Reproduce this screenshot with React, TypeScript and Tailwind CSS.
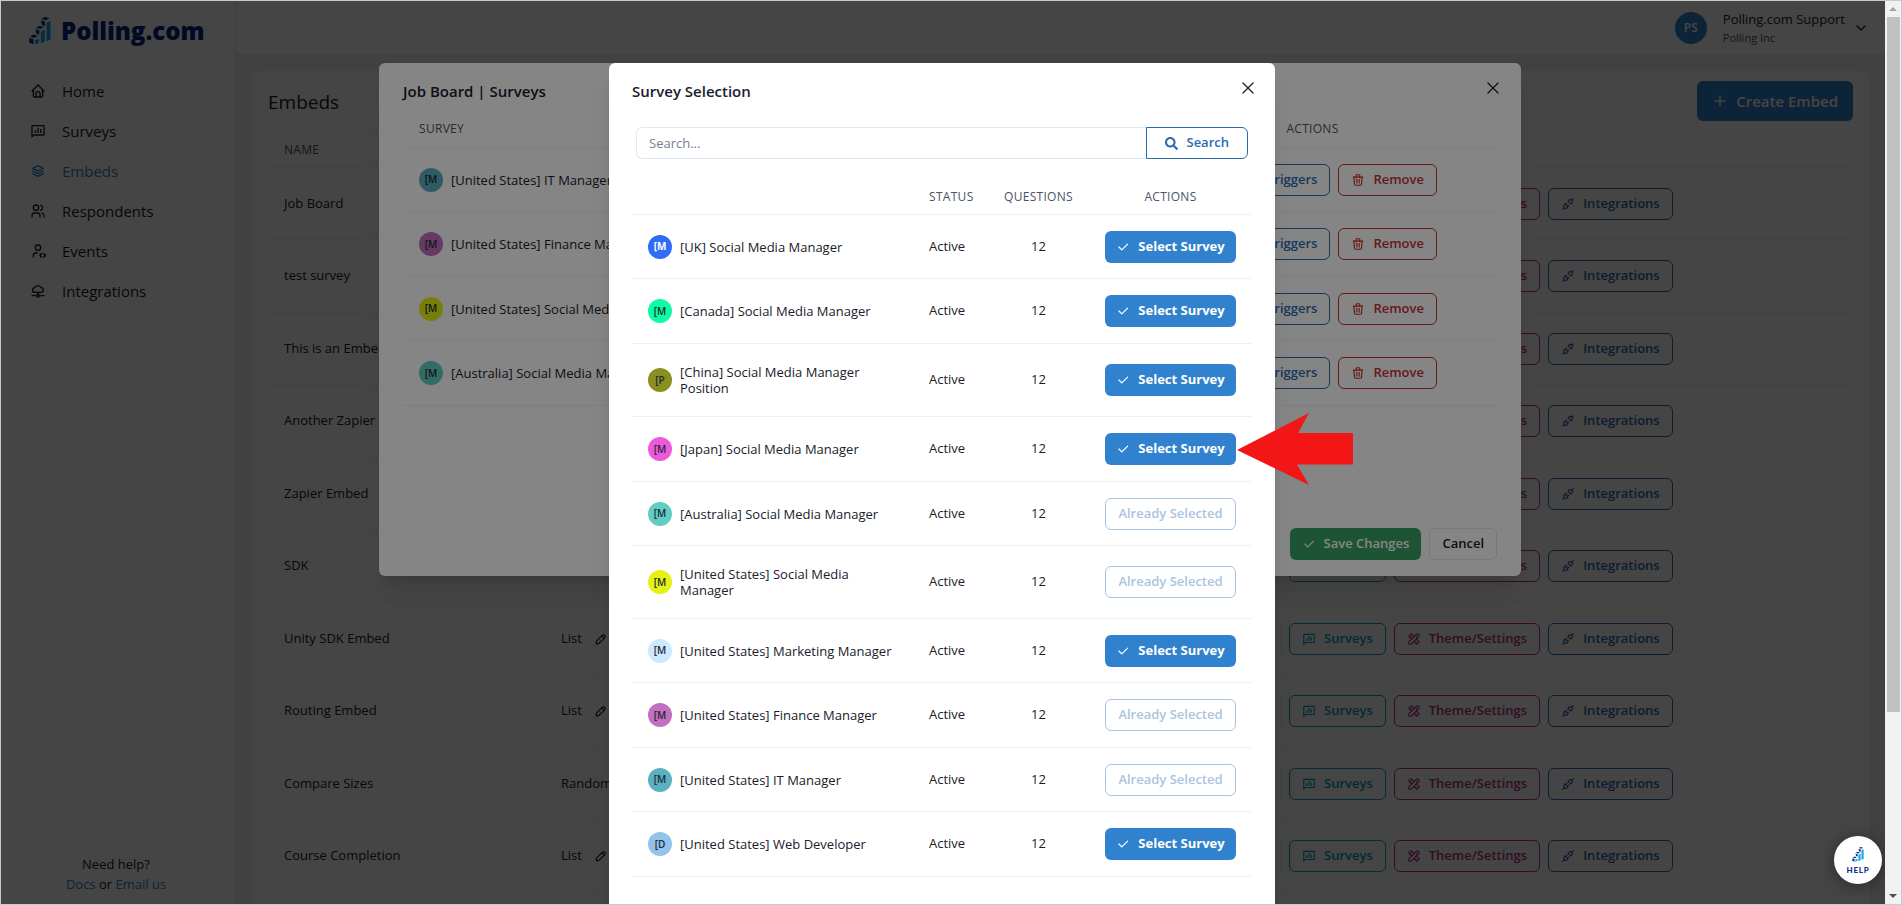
import type { ReactNode } from "react";
import type { IconType } from "react-icons";
import { FaSearch } from "react-icons/fa";
import { RiChatPollLine } from "react-icons/ri";
import {
  TbCheck,
  TbChevronDown,
  TbHome,
  TbPencil,
  TbPlugConnected,
  TbPlus,
  TbStack2,
  TbTools,
  TbTrash,
  TbUsers,
  TbX,
} from "react-icons/tb";

type Survey = {
  name: string;
  initials: string;
  color: string;
  light?: boolean;
  selected?: boolean;
  pointed?: boolean;
};

const surveys: Survey[] = [
  { name: "[UK] Social Media Manager", initials: "[M", color: "#2f6df6", light: true },
  { name: "[Canada] Social Media Manager", initials: "[M", color: "#0dfca4" },
  { name: "[China] Social Media Manager Position", initials: "[P", color: "#8b8f1f" },
  { name: "[Japan] Social Media Manager", initials: "[M", color: "#ee59dc", pointed: true },
  { name: "[Australia] Social Media Manager", initials: "[M", color: "#62cdc2", selected: true },
  { name: "[United States] Social Media Manager", initials: "[M", color: "#e5f213", selected: true },
  { name: "[United States] Marketing Manager", initials: "[M", color: "#cde8ff" },
  { name: "[United States] Finance Manager", initials: "[M", color: "#c26fbf", selected: true },
  { name: "[United States] IT Manager", initials: "[M", color: "#5bb1c0", selected: true },
  { name: "[United States] Web Developer", initials: "[D", color: "#93c2eb" },
];

const boardSurveys = [surveys[8], surveys[7], surveys[5], surveys[4]];

const embeds = [
  { name: "Job Board", type: "List" },
  { name: "test survey", type: "List" },
  { name: "This is an Embed", type: "List" },
  { name: "Another Zapier", type: "List" },
  { name: "Zapier Embed", type: "List" },
  { name: "SDK", type: "List" },
  { name: "Unity SDK Embed", type: "List" },
  { name: "Routing Embed", type: "List" },
  { name: "Compare Sizes", type: "Random" },
  { name: "Course Completion", type: "List" },
];

function UserEventIcon({ className }: { className?: string }) {
  return (
    <svg
      viewBox="0 0 24 24"
      className={className}
      fill="none"
      stroke="currentColor"
      strokeWidth="2"
      strokeLinecap="round"
      strokeLinejoin="round"
      aria-hidden="true"
    >
      <circle cx="12" cy="7" r="4" />
      <path d="M5 21v-2a4 4 0 0 1 4-4h2" />
      <path d="M17 16 15 18.500l2 2.500M21 16l2 2.500-2 2.500" strokeWidth="2.500" />
    </svg>
  );
}

function CloudNetworkIcon({ className }: { className?: string }) {
  return (
    <svg
      viewBox="0 0 24 24"
      className={className}
      fill="none"
      stroke="currentColor"
      strokeWidth="2"
      strokeLinecap="round"
      strokeLinejoin="round"
      aria-hidden="true"
    >
      <path d="M3 19h7M14 19h7M12 14v3" />
      <circle cx="12" cy="19" r="2" />
      <path d="M7.500 14a3.500 3.500 0 0 1-.3-7A5 5 0 0 1 16.500 7a3.500 3.500 0 0 1 0 7z" />
    </svg>
  );
}

const navItems: { label: string; Icon: IconType | typeof UserEventIcon; active?: boolean }[] = [
  { label: "Home", Icon: TbHome },
  { label: "Surveys", Icon: RiChatPollLine },
  { label: "Embeds", Icon: TbStack2, active: true },
  { label: "Respondents", Icon: TbUsers },
  { label: "Events", Icon: UserEventIcon },
  { label: "Integrations", Icon: CloudNetworkIcon },
];

// three stacked columns with isometric caps
function LogoMark({ className }: { className?: string }) {
  return (
    <svg viewBox="0 0 22 28" className={className} aria-hidden="true">
      <path
        fill="#16a5e8"
        d="M17.500 5.500 21.500 4v18.500l-4 1.500zM11.800 14.500l4-1.700v12l-4 1.700zM6 23.300l4-1.500v4L6 27.500z"
      />
      <g fill="#14308c">
        <path d="m16 0 4.500 1.300-3.500 2-4.700-1.300zM11.800 3.200l4.200 1.400v4.600l-3-1.200zM10.500 8.800l4.300 1.300-3.700 2-4.300-1.300zM6.300 12l4.100 1.500v4.200l-3-1zM4.600 17.600l4.300 1.300-3.700 2-4.200-1.300zM.3 20.800l4.200 1.500v5L.3 25.700z" />
      </g>
    </svg>
  );
}

function OutlineButton({ className, children }: { className: string; children: ReactNode }) {
  return (
    <button
      type="button"
      className={`inline-flex h-8 items-center justify-center gap-2 rounded-md border px-3 text-[13px] font-semibold whitespace-nowrap ${className}`}
    >
      {children}
    </button>
  );
}

function SurveyName({ survey }: { survey: Survey }) {
  return (
    <div className="flex items-center gap-2">
      <span
        className={`-my-px flex size-6 shrink-0 items-center justify-center rounded-full text-[10px] ${
          survey.light ? "font-bold text-white" : "font-semibold text-gray-800"
        }`}
        style={{ backgroundColor: survey.color }}
      >
        {survey.initials}
      </span>
      <span className="leading-4">{survey.name}</span>
    </div>
  );
}

function Sidebar() {
  return (
    <aside className="flex w-[235px] shrink-0 flex-col border-r border-[#e2e8f0] bg-white">
      <a href="#" className="flex items-center gap-2.5 px-7 pt-[14px]">
        <LogoMark className="h-7 w-[22px]" />
        <span className="text-2xl leading-8 font-extrabold text-[#0b2580]">Polling.com</span>
      </a>
      <nav className="mt-6 flex flex-col">
        {navItems.map(({ label, Icon, active }) => (
          <a
            key={label}
            href="#"
            className={`flex h-10 items-center gap-4 pl-[29px] text-[15px] ${
              active ? "font-medium text-[#3182ce]" : "text-[#1a202c]"
            }`}
          >
            <Icon className="size-4" />
            {label}
          </a>
        ))}
      </nav>
      <div className="mt-auto pr-1 pb-2.5 text-center text-[13px] leading-5">
        <p>Need help?</p>
        <p>
          <a href="#" className="text-[#3182ce]">
            Docs
          </a>{" "}
          or{" "}
          <a href="#" className="text-[#3182ce]">
            Email us
          </a>
        </p>
      </div>
    </aside>
  );
}

function Header() {
  return (
    <header className="flex h-[54px] shrink-0 items-center justify-end gap-4 border-b border-[#e2e8f0] bg-white pr-4">
      <span className="flex size-8 items-center justify-center rounded-full bg-[#3182ce] text-xs font-semibold text-white">
        PS
      </span>
      <div>
        <p className="text-[13px] leading-5">Polling.com Support</p>
        <p className="text-[11px] leading-[18px] text-[#4a5568]">Polling Inc</p>
      </div>
      <button type="button" aria-label="Account menu" className="-ml-2">
        <TbChevronDown className="size-4" />
      </button>
    </header>
  );
}

function EmbedsCard() {
  return (
    <section className="m-4 rounded-lg bg-white px-4 pb-16">
      <div className="flex h-[60px] items-center justify-between">
        <h1 className="pt-0.5 text-[19px] font-medium">Embeds</h1>
        <button
          type="button"
          className="flex h-10 items-center gap-2 rounded-md bg-[#3182ce] px-[15px] text-[15px] font-semibold text-white"
        >
          <TbPlus className="size-4" />
          Create Embed
        </button>
      </div>
      <table className="w-full table-fixed border-separate border-spacing-0 border-t border-[#edf2f7] text-left text-[13px]">
        <thead>
          <tr className="h-9 text-xs tracking-wide text-[#4a5568]">
            <th className="w-[277px] border-b border-[#edf2f7] px-4 font-normal">NAME</th>
            <th className="w-[620px] border-b border-[#edf2f7] px-4 font-normal">TYPE</th>
            <th className="border-b border-[#edf2f7] px-4 font-normal">ACTIONS</th>
          </tr>
        </thead>
        <tbody>
          {embeds.map((embed) => (
            <tr key={embed.name} className="odd:h-18 even:h-[73px]">
              <td className="border-b border-[#edf2f7] px-4">{embed.name}</td>
              <td className="border-b border-[#edf2f7] px-4">
                <span className="flex items-center gap-3">
                  {embed.type}
                  <TbPencil className="size-[14px]" />
                </span>
              </td>
              <td className="border-b border-[#edf2f7] pl-4">
                <div className="flex gap-2">
                  <OutlineButton className="w-[100px] border-[#e2e8f0]">Details</OutlineButton>
                  <OutlineButton className="border-[#00a3c4] text-[#00a3c4]">
                    <RiChatPollLine className="size-[14px]" />
                    Surveys
                  </OutlineButton>
                  <OutlineButton className="border-[#b83280] text-[#b83280]">
                    <TbTools className="size-[14px]" />
                    Theme/Settings
                  </OutlineButton>
                  <OutlineButton className="border-[#2b6cb0] text-[#2b6cb0]">
                    <TbPlugConnected className="size-[14px]" />
                    Integrations
                  </OutlineButton>
                </div>
              </td>
            </tr>
          ))}
        </tbody>
      </table>
    </section>
  );
}

function ModalHeader({ title }: { title: string }) {
  return (
    <div className="flex h-12 items-start justify-between">
      <h2 className="pt-4 text-[15px] leading-6 font-semibold">{title}</h2>
      <button type="button" aria-label="Close" className="-mr-1.5 pt-[15px]">
        <TbX className="size-5" strokeWidth={1.5} />
      </button>
    </div>
  );
}

function BoardModal() {
  return (
    <div
      role="dialog"
      aria-label="Job Board | Surveys"
      className="flex w-[1142px] max-w-full flex-col self-start rounded-md bg-white px-6 pb-4 shadow-xl"
    >
      <ModalHeader title="Job Board | Surveys" />
      <div className="min-h-[401px]">
        <table className="w-full table-fixed border-separate border-spacing-0 text-left text-[13px]">
          <thead>
            <tr className="h-[37px] text-xs tracking-wide text-[#4a5568]">
              <th className="border-b border-[#edf2f7] px-4 font-normal">SURVEY</th>
              <th className="w-[369px] border-b border-[#edf2f7] px-4 text-center font-normal">
                ACTIONS
              </th>
            </tr>
          </thead>
          <tbody>
            {boardSurveys.map((survey) => (
              <tr key={survey.name} className="odd:h-16 even:h-[65px]">
                <td className="border-b border-[#edf2f7] px-4">
                  <SurveyName survey={survey} />
                </td>
                <td className="border-b border-[#edf2f7] pr-[60px]">
                  <div className="flex justify-end gap-2">
                    <OutlineButton className="border-[#2b6cb0] text-[#2b6cb0]">Triggers</OutlineButton>
                    <OutlineButton className="border-[#c53030] text-[#c53030]">
                      <TbTrash className="size-[14px]" />
                      Remove
                    </OutlineButton>
                  </div>
                </td>
              </tr>
            ))}
          </tbody>
        </table>
      </div>
      <div className="flex justify-end gap-2 pt-4">
        <button
          type="button"
          className="flex h-8 items-center gap-2 rounded-md bg-[#38a169] px-3 text-[13px] font-semibold text-white"
        >
          <TbCheck className="size-[14px]" />
          Save Changes
        </button>
        <OutlineButton className="border-[#e2e8f0]">Cancel</OutlineButton>
      </div>
    </div>
  );
}

function SelectionModal() {
  return (
    <div
      role="dialog"
      aria-label="Survey Selection"
      className="w-[666px] max-w-full rounded-t-md bg-white px-[23px] shadow-xl"
    >
      <ModalHeader title="Survey Selection" />
      <form className="mt-4 flex px-1">
        <input
          type="text"
          aria-label="Search surveys"
          placeholder="Search..."
          className="h-8 min-w-0 flex-1 rounded-l-md border border-r-0 border-[#e2e8f0] px-3 text-[13px] placeholder:text-[#718096]"
        />
        <button
          type="button"
          className="flex h-8 items-center gap-2 rounded-r-md border border-[#2b6cb0] px-[18px] text-[13px] font-semibold text-[#2b6cb0]"
        >
          <FaSearch className="size-[13px]" />
          Search
        </button>
      </form>
      <table className="mt-5 w-full table-fixed border-separate border-spacing-0 text-left text-[13px] text-[#1a202c]">
        <thead>
          <tr className="h-9 text-xs tracking-wide text-[#4a5568]">
            <th aria-label="Survey" className="border-b border-[#edf2f7]" />
            <th className="w-[75px] border-b border-[#edf2f7] pl-4 font-normal">STATUS</th>
            <th className="w-[101px] border-b border-[#edf2f7] text-center font-normal">QUESTIONS</th>
            <th className="w-[163px] border-b border-[#edf2f7] text-center font-normal">ACTIONS</th>
          </tr>
        </thead>
        <tbody>
          {surveys.map((survey) => (
            <tr key={survey.name} className="odd:h-16 even:h-[65px]">
              <td className="border-b border-[#edf2f7] px-4 py-5">
                <SurveyName survey={survey} />
              </td>
              <td className="border-b border-[#edf2f7] pl-4">Active</td>
              <td className="border-b border-[#edf2f7] text-center">12</td>
              <td className="border-b border-[#edf2f7] px-4">
                <div className="relative">
                  {survey.selected ? (
                    <button
                      type="button"
                      disabled
                      className="flex h-8 w-full items-center justify-center rounded-md border border-[#aac4df] text-[13px] font-semibold text-[#aac4df]"
                    >
                      Already Selected
                    </button>
                  ) : (
                    <button
                      type="button"
                      className="flex h-8 w-full items-center justify-center gap-2 rounded-md bg-[#3182ce] text-[13px] font-bold text-white"
                    >
                      <TbCheck className="size-[14px]" />
                      Select Survey
                    </button>
                  )}
                  {survey.pointed && (
                    <svg
                      viewBox="0 0 117 72"
                      className="absolute -top-5 left-full z-10 h-[72px] w-[117px]"
                      aria-hidden="true"
                    >
                      <path
                        fill="#f21616"
                        d="M1 37 73 0 62 20H117V51.500H61L73 72z"
                      />
                    </svg>
                  )}
                </div>
              </td>
            </tr>
          ))}
        </tbody>
      </table>
    </div>
  );
}

function HelpButton() {
  return (
    <button
      type="button"
      className="absolute right-[3px] bottom-5 flex size-12 flex-col items-center justify-center rounded-full bg-white shadow-[0_2px_16px_rgba(0,0,0,0.4)]"
    >
      <LogoMark className="h-[15px] w-3" />
      <span className="mt-1 font-['Lato'] text-[8px] leading-2 font-black tracking-widest text-[#14308c]">
        HELP
      </span>
    </button>
  );
}

function ScrollTrack() {
  return (
    <div className="flex w-4 shrink-0 flex-col items-center bg-[#f1f1f1]">
      <svg viewBox="0 0 16 16" className="size-4" aria-hidden="true">
        <path fill="#a3a3a3" d="M8 6 12 10H4z" />
      </svg>
      <div className="h-[77%] w-[13px] bg-[#c1c1c1]" />
      <svg viewBox="0 0 16 16" className="mt-auto size-4" aria-hidden="true">
        <path fill="#505050" d="M8 10 4 6h8z" />
      </svg>
    </div>
  );
}

export default function App() {
  return (
    <div className="flex h-screen border border-[#c9cbca] font-['Open_Sans','Noto_Sans',sans-serif] text-[#1a202c]">
      <div className="relative flex min-w-0 flex-1 overflow-hidden bg-[#edf2f7]">
        <Sidebar />
        <main className="flex min-w-0 flex-1 flex-col">
          <Header />
          <EmbedsCard />
        </main>
        <div className="absolute inset-y-0 -right-4 left-0 flex justify-center bg-black/48 pt-[62px] pr-0.5">
          <BoardModal />
        </div>
        <div className="absolute inset-0 flex justify-center bg-black/48 pt-[62px] pr-0.5">
          <SelectionModal />
        </div>
        <HelpButton />
      </div>
      <ScrollTrack />
    </div>
  );
}
